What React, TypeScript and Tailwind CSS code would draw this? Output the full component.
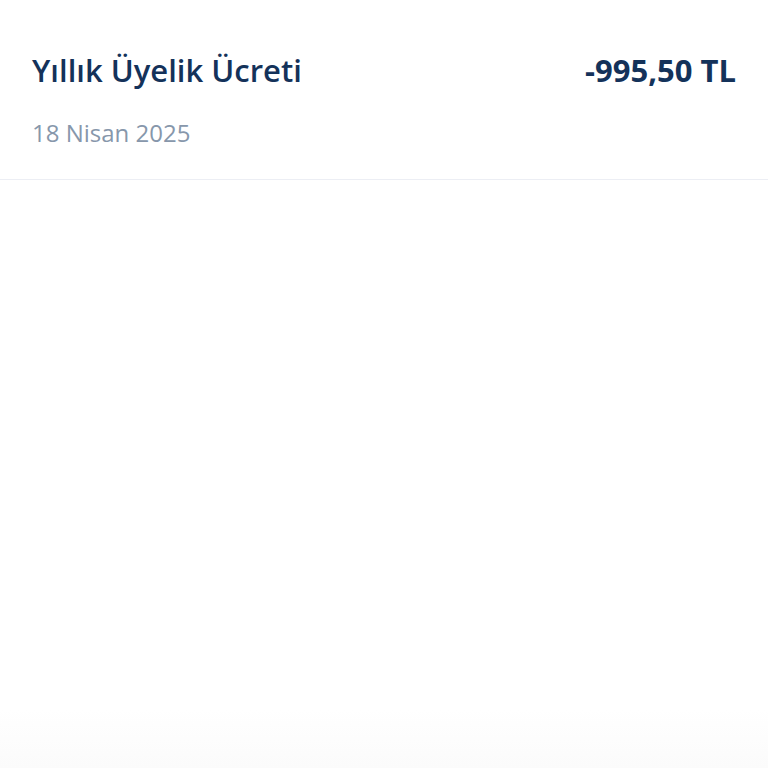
import React from "react";

export default function App() {
  return (
    <div className="w-[768px] h-[768px] bg-white flex flex-col" style={{ fontFamily: '"Open Sans", sans-serif' }}>
      <div className="flex flex-col px-8 pt-[48px] h-[180px] border-b border-[#eceef4]">
        <div className="flex items-center justify-between">
          <span className="text-[31px] font-semibold text-[#14325a] leading-[44px]">Yıllık Üyelik Ücreti</span>
          <span className="text-[31px] font-bold text-[#14325a] leading-[44px]">-995,50 TL</span>
        </div>
        <span className="mt-[26px] text-[24px] font-medium text-[#8797ab] leading-[30px]">18 Nisan 2025</span>
      </div>
      <div className="flex-1 bg-gradient-to-b from-white from-[90%] to-[#fbfbfb]" />
    </div>
  );
}
